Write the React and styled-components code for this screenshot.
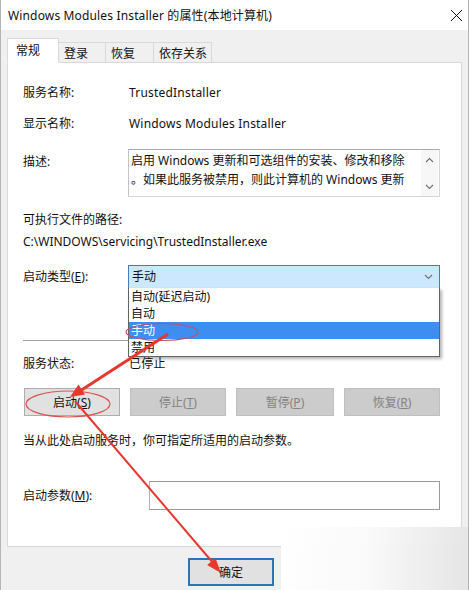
import React from "react";
import styled, { createGlobalStyle } from "styled-components";

const GlobalStyle = createGlobalStyle`
  body {
    margin: 0;
    background: #fff;
    font-family: "Noto Sans", "Noto Sans CJK SC", sans-serif;
    font-size: 12px;
    color: #111;
  }
`;

function arrowHead(x1, y1, x2, y2, len, half) {
    const dx = x2 - x1;
    const dy = y2 - y1;
    const d = Math.sqrt(dx * dx + dy * dy);
    const ux = dx / d;
    const uy = dy / d;
    const bx = x2 - ux * len;
    const by = y2 - uy * len;
    return `${x2},${y2} ${bx - uy * half},${by + ux * half} ${bx + uy * half},${by - ux * half}`;
}

function Chevron({ up }) {
    return (
        <svg width="9" height="6" viewBox="0 0 9 6">
            <path d={up ? "M1 5 L4.5 1.5 L8 5" : "M1 1 L4.5 4.5 L8 1"} fill="none" stroke="#707070" strokeWidth="1.1" />
        </svg>
    );
}

export default function App() {
    const options = ["自动(延迟启动)", "自动", "手动", "禁用"];

    return (
        <>
            <GlobalStyle />
            <Window>
                <TitleBar>
                    <span>Windows Modules Installer 的属性(本地计算机)</span>
                    <svg width="13" height="13" viewBox="0 0 13 13">
                        <path d="M1 1 L12 12 M12 1 L1 12" stroke="#111" strokeWidth="1" />
                    </svg>
                </TitleBar>
                <Body>
                    <TabStrip>
                        <Tab $active $w={52}>常规</Tab>
                        <Tab $w={47}>登录</Tab>
                        <Tab $w={49}>恢复</Tab>
                        <Tab $w={59}>依存关系</Tab>
                    </TabStrip>
                    <Panel>
                        <InfoRow $mt={22}>
                            <span>服务名称:</span>
                            <Value>TrustedInstaller</Value>
                        </InfoRow>
                        <InfoRow $mt={15}>
                            <span>显示名称:</span>
                            <Value>Windows Modules Installer</Value>
                        </InfoRow>
                        <DescRow>
                            <DescLabel>描述:</DescLabel>
                            <DescBox>
                                <DescText>
                                    <div>启用 Windows 更新和可选组件的安装、修改和移除</div>
                                    <div>。如果此服务被禁用，则此计算机的 Windows 更新</div>
                                </DescText>
                                <ScrollBar>
                                    <Chevron up />
                                    <Chevron />
                                </ScrollBar>
                            </DescBox>
                        </DescRow>
                        <Line $mt={15}>可执行文件的路径:</Line>
                        <Line $mt={6}>C:\WINDOWS\servicing\TrustedInstaller.exe</Line>
                        <InfoRow $mt={15}>
                            <span>启动类型(<u>E</u>):</span>
                            <Select>
                                <span>手动</span>
                                <Chevron />
                                <DropList>
                                    {options.map((o) => (
                                        <Option key={o} $selected={o === "手动"}>{o}</Option>
                                    ))}
                                </DropList>
                            </Select>
                        </InfoRow>
                        <Separator />
                        <InfoRow $mt={15}>
                            <span>服务状态:</span>
                            <Value>已停止</Value>
                        </InfoRow>
                        <ButtonRow>
                            <Btn $w={96}>启动(<u>S</u>)</Btn>
                            <Btn $w={96} $disabled>停止(<u>T</u>)</Btn>
                            <Btn $w={98} $disabled>暂停(<u>P</u>)</Btn>
                            <Btn $w={96} $disabled>恢复(<u>R</u>)</Btn>
                        </ButtonRow>
                        <Line $mt={17}>当从此处启动服务时，你可指定所适用的启动参数。</Line>
                        <InfoRow $mt={32} $label={126}>
                            <span>启动参数(<u>M</u>):</span>
                            <ParamInput />
                        </InfoRow>
                    </Panel>
                    <Footer>
                        <OkBtn>确定</OkBtn>
                    </Footer>
                </Body>
                <Watermark />
                <Marks width="470" height="590" viewBox="0 0 470 590">
                    <ellipse cx="162" cy="332" rx="36" ry="8.5" fill="none" stroke="#c84a6a" strokeWidth="1.2" />
                    <ellipse cx="68" cy="404" rx="42" ry="13" fill="none" stroke="#d9534f" strokeWidth="1.2" />
                    <line x1="168" y1="334" x2="80" y2="391" stroke="#e5392f" strokeWidth="3" />
                    <polygon points={arrowHead(168, 334, 70, 397, 14, 6)} fill="#e5392f" />
                    <line x1="75" y1="401" x2="214" y2="564" stroke="#e5392f" strokeWidth="2" />
                    <polygon points={arrowHead(75, 401, 221, 573, 15, 5.5)} fill="#e5392f" />
                </Marks>
            </Window>
        </>
    );
}

const Window = styled.div`
    position: relative;
    box-sizing: border-box;
    width: 469px;
    height: 590px;
    background: #f0f0f0;
    border-left: 1px solid #b5b5b5;
    border-right: 1px solid #b5b5b5;
    overflow: hidden;
`;

const TitleBar = styled.div`
    height: 30px;
    background: #fff;
    display: flex;
    align-items: center;
    justify-content: space-between;
    padding: 0 5px 0 7px;
    color: #111;
    letter-spacing: 0.15px;
`;

const Body = styled.div`
    padding: 8px 6px 0 6px;
`;

const TabStrip = styled.div`
    display: flex;
    align-items: flex-end;
    height: 25px;
    margin-bottom: -1px;
    position: relative;
    z-index: 1;
`;

const Tab = styled.div`
    box-sizing: border-box;
    width: ${(p) => p.$w}px;
    height: ${(p) => (p.$active ? 25 : 21)}px;
    padding: ${(p) => (p.$active ? "0 0 1px 8px" : "0 0 0 5px")};
    margin-left: ${(p) => (p.$active ? 0 : -1)}px;
    display: flex;
    align-items: center;
    background: ${(p) => (p.$active ? "#fff" : "#f0f0f0")};
    border: 1px solid #d9d9d9;
    border-bottom-color: ${(p) => (p.$active ? "#fff" : "#d9d9d9")};
    &:first-child + & {
        margin-left: 0;
        border-left: none;
    }
`;

const Panel = styled.div`
    box-sizing: border-box;
    height: 485px;
    background: #fff;
    border: 1px solid #d9d9d9;
    padding: 0 21px 0 15px;
`;

const InfoRow = styled.div`
    display: grid;
    grid-template-columns: ${(p) => p.$label || 105}px 1fr;
    align-items: center;
    line-height: 16px;
    margin-top: ${(p) => p.$mt || 0}px;
`;

const Value = styled.span`
    padding-left: 1px;
    letter-spacing: 0.2px;
`;

const Line = styled.div`
    line-height: 16px;
    margin-top: ${(p) => p.$mt || 0}px;
`;

const DescRow = styled.div`
    display: grid;
    grid-template-columns: 105px 1fr;
    margin-top: 17px;
    line-height: 16px;
`;

const DescLabel = styled.span`
    margin-top: 5px;
`;

const DescBox = styled.div`
    box-sizing: border-box;
    height: 48px;
    display: flex;
    border: 1px solid #d6d6d6;
    border-top-color: #a9a9a9;
    border-left-color: #c4c4c4;
`;

const DescText = styled.div`
    flex: 1;
    padding: 1px 0 0 2px;
    line-height: 19px;
    white-space: nowrap;
    overflow: hidden;
`;

const ScrollBar = styled.div`
    width: 17px;
    margin-right: 1px;
    display: flex;
    flex-direction: column;
    align-items: center;
    justify-content: space-between;
    padding: 7px 0 6px;
    background: #f7f7f7;
`;

const Select = styled.div`
    position: relative;
    box-sizing: border-box;
    height: 24px;
    display: flex;
    align-items: center;
    justify-content: space-between;
    padding: 0 6px 0 3px;
    background: #cce8ff;
    border: 1px solid #3f7fbf;
`;

const DropList = styled.div`
    position: absolute;
    top: 100%;
    left: -1px;
    right: -1px;
    z-index: 5;
    background: #fff;
    border: 1px solid #646464;
    border-top: none;
    box-shadow: 2px 2px 3px rgba(0, 0, 0, 0.3);
`;

const Option = styled.div`
    height: 17px;
    line-height: 17px;
    padding-left: 2px;
    background: ${(p) => (p.$selected ? "#3d8ef0" : "#fff")};
    color: ${(p) => (p.$selected ? "#fff" : "#111")};
`;

const Separator = styled.div`
    margin-top: 51px;
    border-top: 1px solid #a0a0a0;
`;

const ButtonRow = styled.div`
    display: flex;
    justify-content: space-between;
    margin: 16px 0 0 1px;
`;

const Btn = styled.div`
    box-sizing: border-box;
    width: ${(p) => p.$w}px;
    height: 28px;
    display: flex;
    align-items: center;
    justify-content: center;
    background: ${(p) => (p.$disabled ? "#cccccc" : "#e1e1e1")};
    border: 1px solid ${(p) => (p.$disabled ? "#bfbfbf" : "#adadad")};
    color: ${(p) => (p.$disabled ? "#838383" : "#111")};
`;

const ParamInput = styled.div`
    box-sizing: border-box;
    height: 29px;
    border: 1px solid #9a9a9a;
    border-left-color: #b0b0b0;
    background: #fff;
`;

const Footer = styled.div`
    padding: 11px 0 0 181px;
`;

const OkBtn = styled.div`
    box-sizing: border-box;
    width: 86px;
    height: 28px;
    display: flex;
    align-items: center;
    justify-content: center;
    background: #e1e1e1;
    border: 2px solid #2a74ba;
`;

const Watermark = styled.div`
    position: absolute;
    left: 280px;
    top: 527px;
    width: 190px;
    height: 63px;
    background: linear-gradient(to right, rgba(255, 255, 255, 0.98) 0%, rgba(250, 250, 250, 0.95) 45%, rgba(228, 228, 228, 0.95) 100%);
`;

const Marks = styled.svg`
    position: absolute;
    left: -1px;
    top: 0;
    z-index: 10;
    pointer-events: none;
`;
